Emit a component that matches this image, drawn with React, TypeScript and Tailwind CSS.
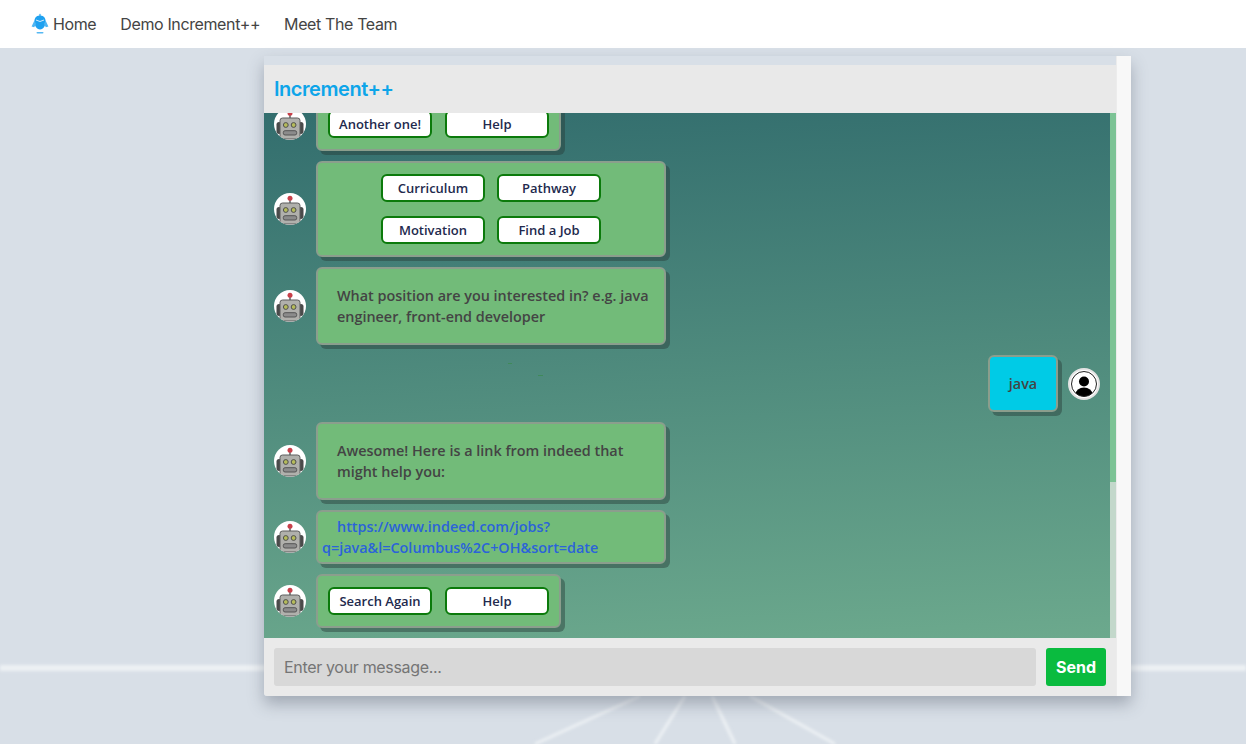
import React from "react";

function RobotAvatar() {
  return (
    <div className="w-8 h-8 shrink-0 rounded-full bg-white overflow-hidden">
      <svg viewBox="0 0 32 32" className="w-8 h-8">
        <rect x="15.2" y="6" width="1.6" height="5" fill="#6b6b6b" />
        <circle cx="16" cy="5.3" r="2.5" fill="#c8404a" />
        <rect x="2.5" y="14" width="5" height="12" rx="2.5" fill="#4a4a4a" />
        <rect x="24.5" y="14" width="5" height="12" rx="2.5" fill="#4a4a4a" />
        <rect x="6" y="10" width="20" height="21" rx="2.5" fill="#b0b0ac" stroke="#5c5c5c" />
        <circle cx="11.8" cy="17" r="2.4" fill="#b5bb5a" stroke="#4f4f4f" />
        <circle cx="19.6" cy="17" r="2.4" fill="#b5bb5a" stroke="#4f4f4f" />
        <rect x="9.3" y="22.7" width="13.4" height="4.3" rx="1.8" fill="#8b8b8b" stroke="#555555" />
      </svg>
    </div>
  );
}

function UserAvatar() {
  return (
    <div className="w-8 h-8 shrink-0 rounded-full bg-white border-2 border-[#e4e4e4] flex items-center justify-center">
      <svg viewBox="0 0 28 28" className="w-7 h-7 shrink-0">
        <defs>
          <clipPath id="userClip">
            <circle cx="14" cy="14" r="12.5" />
          </clipPath>
        </defs>
        <circle cx="14" cy="14" r="12.5" fill="#ffffff" />
        <g clipPath="url(#userClip)">
          <circle cx="14" cy="11.5" r="5" fill="#000000" />
          <ellipse cx="14" cy="24.5" rx="8.5" ry="7" fill="#000000" />
        </g>
        <circle cx="14" cy="14" r="12.5" fill="none" stroke="#222222" strokeWidth="1" />
      </svg>
    </div>
  );
}

function Logo() {
  return (
    <svg viewBox="0 0 18 22" className="w-[18px] h-[22px]">
      <circle cx="9" cy="2" r="1.2" fill="#7cc8f5" />
      <path d="M9 2.5 C4.5 2.5 3.4 6 3.4 8.5 C3.4 12.5 5.5 16.5 9 16.5 C12.5 16.5 14.6 12.5 14.6 8.5 C14.6 6 13.5 2.5 9 2.5 Z" fill="#1ea1f0" />
      <path d="M3.4 7.5 L0.6 13.5 L3.2 14.2 L5 11 Z" fill="#4db5f3" />
      <path d="M14.6 7.5 L17.4 13.5 L14.8 14.2 L13 11 Z" fill="#4db5f3" />
      <path d="M5 7 Q9 10 13 7" stroke="#cfeafb" strokeWidth="1" fill="none" />
      <rect x="5.5" y="19" width="7" height="1.6" rx="0.8" fill="#55b8f3" />
    </svg>
  );
}

function Bubble({ className, children }: { className: string; children: React.ReactNode }) {
  return (
    <div className={"border-2 border-[#8b9e8d] rounded-[6px] bg-[#72bb79] shadow-[4px_4px_0_rgba(40,60,55,0.45)] font-semibold text-[14.4px] leading-[21px] " + className}>
      {children}
    </div>
  );
}

function Chip({ label }: { label: string }) {
  return (
    <div className="w-[104px] h-[28px] flex items-center justify-center bg-white border-2 border-[#0b7a0b] rounded-[6px] text-[13px] font-semibold text-[#22294d]">
      {label}
    </div>
  );
}

function BotRow({ children }: { children: React.ReactNode }) {
  return (
    <div className="flex items-center gap-[10px] pl-[10px]">
      <RobotAvatar />
      {children}
    </div>
  );
}

export default function App() {
  return (
    <div className="relative h-[746px] overflow-hidden bg-white font-['Inter',sans-serif]">
      <div className="absolute left-0 right-0 top-12 h-[696px] bg-[#d8dfe7]">
        <svg viewBox="0 0 1246 696" className="w-full h-full">
          <defs>
            <filter id="soft">
              <feGaussianBlur stdDeviation="1.5" />
            </filter>
          </defs>
          <g filter="url(#soft)" stroke="#edf1f4" fill="none">
            <path d="M0 620 H1246" strokeWidth="6" />
            <path d="M535 696 L640 648" strokeWidth="3" />
            <path d="M655 696 L685 648" strokeWidth="3" />
            <path d="M735 696 L712 648" strokeWidth="3" />
            <path d="M835 696 L750 648" strokeWidth="3" />
          </g>
        </svg>
      </div>

      <nav className="relative h-12 bg-white flex items-center pl-[31px] text-[16px] tracking-[-0.38px] text-[#444444]">
        <Logo />
        <span className="ml-[4px]">Home</span>
        <span className="ml-6">Demo Increment++</span>
        <span className="ml-6">Meet The Team</span>
      </nav>

      <div className="relative pl-[264px] pt-2">
        <div className="w-[867px] h-[640px] flex shadow-[0_8px_16px_rgba(60,70,85,0.35)] rounded-bl-[3px]">
          <div className="w-[852px] mt-[9px] flex flex-col">
            <header className="h-12 shrink-0 bg-[#e9e9e9] flex items-center pl-[10px] text-[20px] font-semibold tracking-[-0.45px] text-[#0ea5e9]">
              Increment++
            </header>

            <div className="relative h-[525px] flex overflow-hidden bg-linear-[177deg] from-[#336e6e] to-[#6ca98d]">
              <span className="absolute left-[244px] top-[250px] w-[4px] h-[1px] bg-[#3f8a5a]" />
              <span className="absolute left-[274px] top-[262px] w-[5px] h-[1px] bg-[#3f8a5a]" />
              <div className="w-[846px] -mt-[16px] flex flex-col gap-[10px] font-['Open_Sans',sans-serif] text-[#444444]">
                <BotRow>
                  <Bubble className="w-[245px] h-[54px] flex items-center pl-[10px] gap-[13px]">
                    <Chip label="Another one!" />
                    <Chip label="Help" />
                  </Bubble>
                </BotRow>

                <BotRow>
                  <Bubble className="w-[350px] h-[96px] flex flex-col items-center justify-center gap-[14px]">
                    <div className="flex gap-3">
                      <Chip label="Curriculum" />
                      <Chip label="Pathway" />
                    </div>
                    <div className="flex gap-3">
                      <Chip label="Motivation" />
                      <Chip label="Find a Job" />
                    </div>
                  </Bubble>
                </BotRow>

                <BotRow>
                  <Bubble className="w-[350px] h-[78px] pl-[19px] pr-[10px] flex items-center">
                    What position are you interested in? e.g. java engineer, front-end developer
                  </Bubble>
                </BotRow>

                <div className="flex items-center justify-end gap-[10px] pr-[10px]">
                  <Bubble className="w-[70px] h-[57px] !bg-[#00cbe6] flex items-center justify-center">java</Bubble>
                  <UserAvatar />
                </div>

                <BotRow>
                  <Bubble className="w-[350px] h-[78px] pl-[19px] pr-[30px] flex items-center">
                    Awesome! Here is a link from indeed that might help you:
                  </Bubble>
                </BotRow>

                <BotRow>
                  <Bubble className="w-[350px] h-[54px] pl-[4px] pr-[10px] flex items-center">
                    <a className="block indent-[15px] text-[#2b63d9]">
                      https://www.indeed.com/jobs?
                      <br />
                      q=java&amp;l=Columbus%2C+OH&amp;sort=date
                    </a>
                  </Bubble>
                </BotRow>

                <BotRow>
                  <Bubble className="w-[245px] h-[54px] flex items-center pl-[10px] gap-[13px]">
                    <Chip label="Search Again" />
                    <Chip label="Help" />
                  </Bubble>
                </BotRow>
              </div>

              <div className="w-[6px] flex flex-col">
                <div className="h-[369px] bg-[#7cc395]" />
                <div className="flex-1 bg-[#c3d8cb]" />
              </div>
            </div>

            <div className="h-[58px] shrink-0 bg-[#eaeaea] flex items-center px-[10px] gap-[10px] rounded-bl-[3px]">
              <div className="flex-1 h-[38px] bg-[#d8d8d8] rounded-[3px] flex items-center pl-[10px] text-[16px] tracking-[-0.33px] text-[#757575]">
                Enter your message...
              </div>
              <div className="w-[60px] h-[38px] bg-[#0abb3f] rounded-[3px] flex items-center justify-center text-[16px] font-bold text-white">
                Send
              </div>
            </div>
          </div>

          <div className="w-[15px] bg-[#f8f8f8] border-l border-[#ececec]" />
        </div>
      </div>
    </div>
  );
}
